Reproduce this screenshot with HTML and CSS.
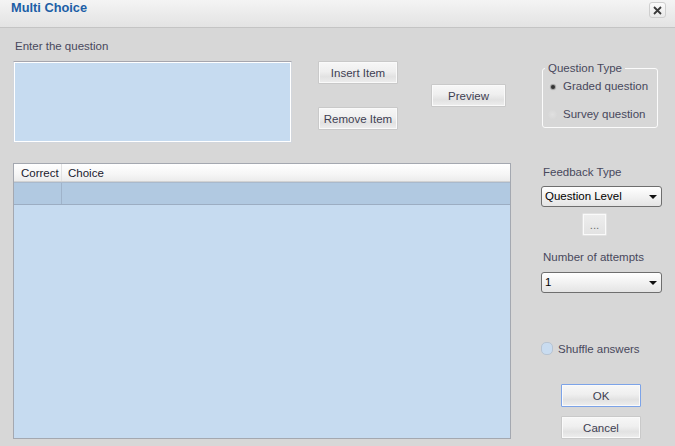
FILE: index.html
```html
<!DOCTYPE html>
<html lang="en">
<head>
    <meta charset="UTF-8">
    <title>Multi Choice</title>
    <link rel="stylesheet" href="styles.css">
</head>
<body>
    <div class="titlebar">
        <span class="title">Multi Choice</span>
        <span class="close">
            <svg width="9" height="9" viewBox="0 0 9 9"><path d="M1 1L8 8M8 1L1 8" stroke="#3a3a3a" stroke-width="1.8"/></svg>
        </span>
    </div>
    <div class="content">
        <div class="main">
            <div class="label prompt-label">Enter the question</div>
            <div class="top-row">
                <div class="question"></div>
                <div class="item-buttons">
                    <button class="button item-btn">Insert Item</button>
                    <button class="button item-btn">Remove Item</button>
                </div>
                <button class="button preview">Preview</button>
            </div>
            <div class="grid">
                <div class="grid-head">
                    <div class="col-correct">Correct</div>
                    <div class="col-choice">Choice</div>
                </div>
                <div class="grid-row">
                    <div class="col-correct"></div>
                    <div class="col-choice"></div>
                </div>
            </div>
        </div>
        <div class="side">
            <div class="qtype">
                <div class="qtype-title">Question Type</div>
                <div class="radio-row first"><span class="radio on"></span>Graded question</div>
                <div class="radio-row"><span class="radio"></span>Survey question</div>
            </div>
            <div class="label feedback-label">Feedback Type</div>
            <div class="dropdown">Question Level<span class="arrow"></span></div>
            <button class="button dots">...</button>
            <div class="label attempts-label">Number of attempts</div>
            <div class="dropdown attempts">1<span class="arrow"></span></div>
            <div class="shuffle"><span class="check"></span>Shuffle answers</div>
            <button class="button dialog-btn ok">OK</button>
            <button class="button dialog-btn cancel">Cancel</button>
        </div>
    </div>
</body>
</html>
```
FILE: styles.css
```css
body {
    margin: 0;
    width: 675px;
    height: 446px;
    overflow: hidden;
    background-color: #d7d7d7;
    font-family: "Liberation Sans", Arial, sans-serif;
    font-size: 11.5px;
    color: #48485c;
}
.titlebar {
    height: 27px;
    display: flex;
    justify-content: space-between;
    align-items: flex-start;
    padding: 0 9px 0 11px;
    background: linear-gradient(#f4f4f4, #e3e3e3);
    border-bottom: 1px solid #c4c4c4;
}
.title {
    font-weight: bold;
    font-size: 12.8px;
    line-height: 16px;
    color: #1c5ea6;
}
.close {
    margin-top: 2px;
    width: 15px;
    height: 14px;
    border: 1px solid #cfcfcf;
    border-radius: 3px;
    background: linear-gradient(#fbfbfb, #e9e9e9);
    display: flex;
    align-items: center;
    justify-content: center;
}
.content {
    display: flex;
    padding-left: 13px;
}
.main {
    width: 498px;
}
.label {
    line-height: 15px;
    padding-left: 2px;
}
.prompt-label {
    margin: 11px 0 7px;
}
.top-row {
    display: flex;
    align-items: flex-start;
}
.question {
    box-sizing: border-box;
    width: 279px;
    height: 82px;
    background-color: #c6dbf0;
    border: 1px solid #d2d6dc;
    border-top-color: #a6a6ae;
    box-shadow: inset 0 0 0 1px #fff;
}
.button {
    box-sizing: border-box;
    height: 23px;
    padding: 0;
    font-family: inherit;
    font-size: 11.5px;
    color: #3e3e52;
    border: 1px solid #c9c9c9;
    border-radius: 1px;
    background: linear-gradient(#f7f7f7, #efefef 45%, #e2e2e2 70%, #eeeeee);
    box-shadow: inset 0 0 0 1px #fafafa;
}
.item-buttons {
    display: flex;
    flex-direction: column;
    gap: 23px;
    margin-left: 26px;
}
.item-btn {
    width: 80px;
}
.preview {
    width: 75px;
    margin: 23px 0 0 33px;
}
.grid {
    box-sizing: border-box;
    margin-top: 20px;
    width: 498px;
    height: 276px;
    border: 1px solid #a4a8b0;
    background-color: #c6dbf0;
}
.grid-head {
    display: flex;
    height: 17px;
    line-height: 19px;
    color: #1a1a2e;
    background: linear-gradient(#ffffff, #f6f6f6 60%, #ececec);
    border-bottom: 1px solid #d2d2d2;
}
.grid-row {
    display: flex;
    height: 21px;
    background-color: #b1c9e1;
    border-top: 1px solid #a9b9cc;
    border-bottom: 1px solid #9cadc2;
}
.col-correct {
    width: 48px;
    padding-left: 7px;
    box-sizing: border-box;
}
.col-choice {
    flex: 1;
    padding-left: 6px;
}
.grid-head .col-correct {
    border-right: 1px solid #e2e2e2;
}
.grid-row .col-correct {
    border-right: 1px solid #9fb3ca;
}
.side {
    width: 122px;
    margin-left: 30px;
}
.qtype {
    box-sizing: border-box;
    width: 116px;
    height: 60px;
    margin: 40px 0 0 1px;
    border: 1px solid #fbfbfb;
    border-radius: 3px;
}
.qtype-title {
    width: fit-content;
    margin: -8px 0 0 2px;
    padding: 0 3px;
    line-height: 14px;
    background-color: #d7d7d7;
}
.radio-row {
    display: flex;
    align-items: center;
    line-height: 15px;
    padding-left: 4px;
    margin-top: 13px;
}
.radio-row.first {
    margin-top: 4px;
}
.radio {
    position: relative;
    box-sizing: border-box;
    width: 11px;
    height: 11px;
    margin-right: 5px;
    border-radius: 50%;
    background: radial-gradient(#e0e0e0, #d2d2d2);
}
.radio.on::after {
    content: "";
    position: absolute;
    left: 3.5px;
    top: 3.5px;
    width: 4px;
    height: 4px;
    border-radius: 50%;
    background-color: #333;
    box-shadow: 0 0 1px 1px #9a9a9a;
}
.feedback-label {
    margin-top: 37px;
}
.dropdown {
    position: relative;
    box-sizing: border-box;
    width: 121px;
    height: 21px;
    margin-top: 6px;
    padding-left: 3px;
    line-height: 19px;
    color: #000;
    border: 1px solid #6e6e6e;
    border-radius: 3px;
    background: linear-gradient(#ffffff, #f2f2f2 50%, #e4e4e4);
}
.arrow {
    position: absolute;
    right: 4px;
    top: 8px;
    border-left: 4px solid transparent;
    border-right: 4px solid transparent;
    border-top: 4px solid #111;
}
.dots {
    display: block;
    width: 25px;
    margin: 6px 0 0 41px;
    color: #707070;
    border-color: #e2e2e2;
    background: linear-gradient(#eeeeee, #e2e2e2);
}
.attempts-label {
    margin-top: 14px;
}
.dropdown.attempts {
    margin-top: 7px;
}
.shuffle {
    display: flex;
    align-items: center;
    height: 13px;
    margin-top: 49px;
}
.check {
    box-sizing: border-box;
    width: 12px;
    height: 13px;
    margin-right: 5px;
    border: 1px solid #b8c4d2;
    border-radius: 5px;
    background-color: #c9dcf0;
}
.dialog-btn {
    display: block;
    width: 80px;
    margin-left: 20px;
}
.ok {
    margin-top: 29px;
    border-color: #7ca3e8;
}
.cancel {
    margin-top: 9px;
}
```
